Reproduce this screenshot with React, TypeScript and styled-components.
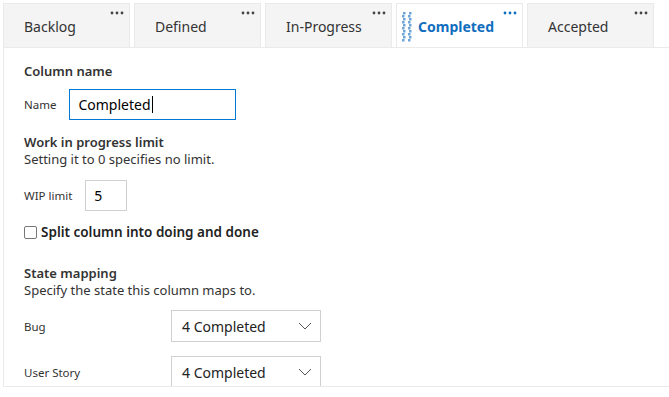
import styled, { createGlobalStyle } from "styled-components";

const GlobalStyle = createGlobalStyle`
  body {
    margin: 0;
    background: #ffffff;
    font-family: "Segoe UI", "Noto Sans", "Open Sans", sans-serif;
    color: #333333;
  }
`;

const Page = styled.div`
  padding: 3px 0 0 3px;
  width: 666px;
  height: 394px;
  overflow: hidden;
`;

const TabStrip = styled.div`
  display: flex;
  gap: 4px;
  border-bottom: 1px solid #eaeaea;
  width: 900px;
`;

const Tab = styled.div<{ $active?: boolean }>`
  position: relative;
  box-sizing: border-box;
  flex: 0 0 127px;
  height: 44px;
  display: flex;
  align-items: center;
  padding-left: ${(p) => (p.$active ? "5px" : "20px")};
  gap: 5px;
  border: 1px solid #eaeaea;
  border-bottom: none;
  background: ${(p) => (p.$active ? "#ffffff" : "#f4f4f4")};
  color: ${(p) => (p.$active ? "#106ebe" : "#333333")};
  font-size: 14px;
  font-weight: ${(p) => (p.$active ? 700 : 400)};
  padding-top: 1px;
`;

const More = styled.svg`
  position: absolute;
  top: 7px;
  right: 5px;
`;

const Panel = styled.div`
  box-sizing: border-box;
  height: 339px;
  width: 900px;
  border-left: 1px solid #eaeaea;
  border-bottom: 1px solid #eaeaea;
  padding: 15px 20px 0 20px;
  overflow: hidden;
  font-size: 13px;
  line-height: 17px;
`;

const Heading = styled.div<{ $top?: number }>`
  font-weight: 600;
  margin-top: ${(p) => p.$top ?? 0}px;
`;

const Help = styled.div``;

const Row = styled.div<{ $top: number }>`
  display: flex;
  align-items: center;
  margin-top: ${(p) => p.$top}px;
`;

const Label = styled.label<{ $width?: number }>`
  font-size: 11.5px;
  color: #333333;
  width: ${(p) => (p.$width ? `${p.$width}px` : "auto")};
  margin-right: ${(p) => (p.$width ? 0 : 13)}px;
`;

const TextBox = styled.div<{ $width: number; $focused?: boolean }>`
  box-sizing: border-box;
  width: ${(p) => p.$width}px;
  height: 31px;
  border: 1px solid ${(p) => (p.$focused ? "#0078d4" : "#d0d0d0")};
  padding: 0 8px;
  display: flex;
  align-items: center;
  font-size: 14px;
  color: #000000;
`;

const Caret = styled.span`
  display: inline-block;
  width: 1px;
  height: 17px;
  background: #000000;
  margin-left: 1px;
`;

const Check = styled.span`
  box-sizing: border-box;
  width: 13px;
  height: 13px;
  border: 1px solid #777777;
  border-radius: 2px;
  margin-right: 4px;
`;

const CheckText = styled.span`
  font-weight: 600;
  font-size: 13.5px;
  color: #222222;
`;

const Select = styled.div`
  box-sizing: border-box;
  width: 150px;
  height: 32px;
  border: 1px solid #d0d0d0;
  display: flex;
  align-items: center;
  justify-content: space-between;
  padding: 0 8px 0 10px;
  font-size: 14px;
  color: #222222;
`;

const Grip = () => (
  <svg width="11" height="31" viewBox="0 0 11 31">
    {Array.from({ length: 10 }).map((_, r) => (
      <g key={r} fill="#6fa5d6">
        <rect x={r % 2 === 0 ? 1 : 0} y={r * 3 + 1} width="2.5" height="2.5" />
        <rect x={r % 2 === 0 ? 7 : 6} y={r * 3 + 1} width="2.5" height="2.5" />
      </g>
    ))}
  </svg>
);

const MoreDots = ({ color }: { color: string }) => (
  <More width="14" height="4" viewBox="0 0 14 4">
    <circle cx="2" cy="2" r="1.4" fill={color} />
    <circle cx="7" cy="2" r="1.4" fill={color} />
    <circle cx="12" cy="2" r="1.4" fill={color} />
  </More>
);

const Chevron = () => (
  <svg width="14" height="8" viewBox="0 0 14 8">
    <path d="M1 1 L7 7 L13 1" fill="none" stroke="#555555" strokeWidth="1" />
  </svg>
);

const columns = ["Backlog", "Defined", "In-Progress", "Completed", "Accepted"];

export default function App() {
  return (
    <Page>
      <GlobalStyle />
      <TabStrip>
        {columns.map((c) => {
          const active = c === "Completed";
          return (
            <Tab key={c} $active={active}>
              {active && <Grip />}
              {c}
              <MoreDots color={active ? "#106ebe" : "#444444"} />
            </Tab>
          );
        })}
      </TabStrip>
      <Panel>
        <Heading>Column name</Heading>
        <Row $top={9}>
          <Label>Name</Label>
          <TextBox $width={167} $focused>
            Completed
            <Caret />
          </TextBox>
        </Row>
        <Heading $top={14}>Work in progress limit</Heading>
        <Help>Setting it to 0 specifies no limit.</Help>
        <Row $top={12}>
          <Label>WIP limit</Label>
          <TextBox $width={42}>5</TextBox>
        </Row>
        <Row $top={13}>
          <Check />
          <CheckText>Split column into doing and done</CheckText>
        </Row>
        <Heading $top={24}>State mapping</Heading>
        <Help>Specify the state this column maps to.</Help>
        <Row $top={11}>
          <Label $width={147}>Bug</Label>
          <Select>
            4 Completed
            <Chevron />
          </Select>
        </Row>
        <Row $top={14}>
          <Label $width={147}>User Story</Label>
          <Select>
            4 Completed
            <Chevron />
          </Select>
        </Row>
      </Panel>
    </Page>
  );
}
